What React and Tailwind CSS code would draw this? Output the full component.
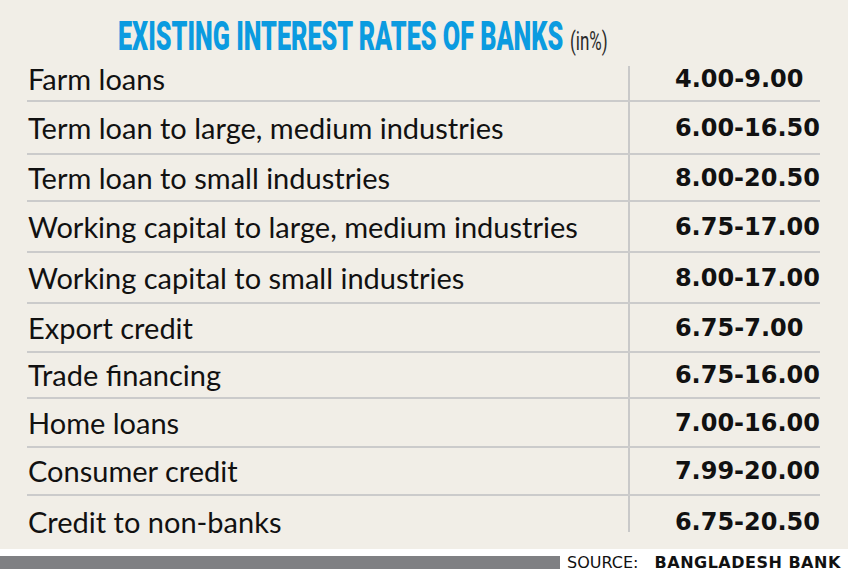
const rates = [
  { label: 'Farm loans', value: '4.00-9.00', row: 'h-[45px]', bar: 'mt-[9px]' },
  { label: 'Term loan to large, medium industries', value: '6.00-16.50', row: 'h-[53px]', bar: '' },
  { label: 'Term loan to small industries', value: '8.00-20.50', row: 'h-[47px]', bar: '' },
  { label: 'Working capital to large, medium industries', value: '6.75-17.00', row: 'h-[51px]', bar: '' },
  { label: 'Working capital to small industries', value: '8.00-17.00', row: 'h-[51px]', bar: '' },
  { label: 'Export credit', value: '6.75-7.00', row: 'h-[49px]', bar: '' },
  { label: 'Trade financing', value: '6.75-16.00', row: 'h-[46px]', bar: '' },
  { label: 'Home loans', value: '7.00-16.00', row: 'h-[49px]', bar: '' },
  { label: 'Consumer credit', value: '7.99-20.00', row: 'h-[48px]', bar: '' },
  { label: 'Credit to non-banks', value: '6.75-20.50', row: 'h-[52px]', bar: 'mb-[16px]' },
]

export default function App() {
  return (
    <div className="w-[848px] h-[577px] bg-white overflow-hidden">
      <div className="h-[549px] bg-[#f1eee7]">
        <div className="h-[57px] pl-[118px] pt-[16px] flex items-baseline">
          <div className="w-[444px]">
            <span className="inline-block origin-left scale-x-[0.614] whitespace-nowrap font-['Roboto'] font-black text-[41px] leading-none text-[#0b9be0]">
              EXISTING INTEREST RATES OF BANKS
            </span>
          </div>
          <div className="ml-[8px] w-[37px]">
            <span className="inline-block origin-left scale-x-[0.68] whitespace-nowrap font-['Roboto'] text-[25px] leading-none text-[#2a2a2a]">
              (in%)
            </span>
          </div>
        </div>
        <div className="ml-[27px] w-[793px]">
          {rates.map((r, i) => (
            <div key={r.label} className={`flex ${r.row} ${i < rates.length - 1 ? 'border-b-2 border-[#cbcbcb]' : ''}`}>
              <div className="w-[601px] pl-[1px] flex items-center whitespace-nowrap font-['Lato'] text-[29px] text-[#111]">
                {r.label}
              </div>
              <div className={`w-[2px] bg-[#c9c9c9] ${r.bar}`} />
              <div className="flex-1 pl-[45px] flex items-center whitespace-nowrap font-['DejaVu_Sans'] font-bold text-[24px] text-[#111]">
                {r.value}
              </div>
            </div>
          ))}
        </div>
      </div>
      <div className="mt-[7px] flex items-center h-[13px]">
        <div className="w-[560px] h-[13px] bg-[#7f8083]" />
        <div className="ml-[7px] whitespace-nowrap font-['DejaVu_Sans'] text-[16px] leading-none text-[#111]">
          SOURCE: <span className="ml-[11px] font-bold tracking-[0.5px]">BANGLADESH BANK</span>
        </div>
      </div>
    </div>
  )
}
